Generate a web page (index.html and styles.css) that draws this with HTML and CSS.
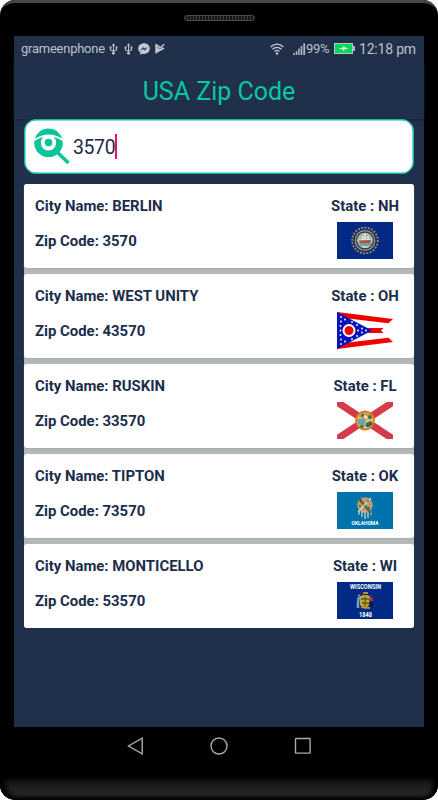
FILE: index.html
```html
<!DOCTYPE html>
<html lang="en">
<head>
<meta charset="utf-8">
<title>USA Zip Code</title>
<link rel="stylesheet" href="styles.css">
</head>
<body>
<div class="phone">
  <div class="bezel-top"><span class="speaker"></span></div>
  <main class="screen">
    <div class="status">
      <div class="status-left">
        <span class="carrier">grameenphone</span>
        <svg class="ico usb" viewBox="0 0 10 14"><use href="#usb"/></svg>
        <svg class="ico usb second" viewBox="0 0 10 14"><use href="#usb"/></svg>
        <svg class="ico messenger" viewBox="0 0 12 12"><path fill="#c3c8d0" d="M6 .3C2.7.3.2 2.6.2 5.6c0 1.7.8 3.2 2.1 4.2v2l1.9-1c.6.2 1.2.2 1.8.2 3.3 0 5.8-2.3 5.8-5.4S9.3.3 6 .3Z"/><path d="M2.7 7 5.3 4.5 6.7 5.9 9.2 4.5 6.7 7.2 5.2 5.8Z" fill="#20304a" stroke="#20304a" stroke-width=".5"/></svg>
        <svg class="ico play" viewBox="0 0 10 11"><path fill="#c3c8d0" d="M.3.5 5 3 4.600 3.900 3.600 3 2.500 4.200 4.700 6.600 7.600 3.900 9.700 5.500.3 10.700Z"/><path d="M3.500 3.700 4.800 5 9.200 1.300" fill="none" stroke="#c3c8d0" stroke-width="1.300"/></svg>
      </div>
      <div class="status-right">
        <svg class="ico wifi" viewBox="0 0 14 12"><g fill="none" stroke="#c3c8d0" stroke-width="1.3"><path d="M.6 3.9Q7-1.6 13.4 3.9M2.500 6.300Q7 2.400 11.500 6.300M4.500 8.500Q7 6.400 9.500 8.500"/></g><circle cx="7" cy="10.500" r="1.200" fill="#c3c8d0"/></svg>
        <svg class="ico signal" viewBox="0 0 13 12"><path fill="#aeb5c0" d="M.2 10h1.600v2H.2zM2.700 8h1.600v4H2.700zM5.200 5.500h1.600V12H5.200zM7.700 3h1.600v9H7.700zM10.300.3h1.800V12h-1.800z"/></svg>
        <span class="percent">99%</span>
        <svg class="ico battery" viewBox="0 0 22 11"><rect x=".5" y=".5" width="18" height="10" fill="#08d85a" stroke="#bcc2cb"/><path d="M20 3v5" stroke="#aeb5c0" stroke-width="2"/><path fill="#e8fff2" d="M4.500 5.500 9 4.500l.6-1.500 1.500 1.500 3.400 1-3.900 1-1 1.400L8.500 6.300Z"/></svg>
        <span class="clock">12:18 pm</span>
      </div>
    </div>
    <h1 class="title">USA Zip Code</h1>
    <div class="search">
      <svg class="search-icon" viewBox="0 0 36 37"><path d="m23 24 11.500 11" stroke="#0cc39c" stroke-width="3.600"/><circle cx="14.500" cy="14.800" r="14.300" fill="#0cc39c"/><path d="M0 12.300Q14.500 2.500 29 12.300" fill="none" stroke="#fff" stroke-width="1.700"/><circle cx="14.500" cy="14.800" r="7.700" fill="#fff"/><circle cx="14.500" cy="14.600" r="3.800" fill="#0cc39c"/></svg>
      <span class="query">3570</span><span class="caret"></span>
    </div>
    <section class="results">
      <article class="card">
        <div class="info"><p>City Name: BERLIN</p><p>Zip Code: 3570</p></div>
        <div class="state"><p>State : NH</p>
          <svg class="flag" viewBox="0 0 56 37"><rect width="56" height="37" fill="#002a86"/><circle cx="28" cy="18.500" r="12.800" fill="none" stroke="#a58445" stroke-width="2" stroke-dasharray="2 1.300"/><circle cx="28" cy="18.500" r="9.800" fill="#1c3c78" stroke="#b09656" stroke-width="1.300"/><circle cx="28" cy="18.500" r="7.800" fill="#dccb9f"/><path d="M21 17a7.300 7.300 0 0 1 14 0Z" fill="#9cb9b4"/><path d="M21 20h14a7 7 0 0 1-2 4H23Z" fill="#6ba3ad"/><path d="M21.500 18.500 34.500 18l-2 3h-9Z" fill="#a9533f"/><path d="M25.500 18v-4m2.500 4v-6m3 6v-4" stroke="#f4eee0" stroke-width="1.500"/></svg>
        </div>
      </article>
      <article class="card">
        <div class="info"><p>City Name: WEST UNITY</p><p>Zip Code: 43570</p></div>
        <div class="state"><p>State : OH</p>
          <svg class="flag" viewBox="0 0 56 37"><path fill="#fff" d="m0 0 56 7-12 11.500L56 30 0 37Z"/><path fill="#f00000" d="m0 0 56 7-4.500 4.300L0 5.300ZM0 37l56-7-4.500-4.300L0 31.700ZM0 16h46.500L44 18.500l2.500 2.500H0Z"/><path fill="#0714bd" d="m0 0 35 18.500L0 37Z"/><g fill="#fff"><circle cx="4" cy="5" r=".9"/><circle cx="8" cy="7.500" r=".9"/><circle cx="4" cy="9.500" r=".9"/><circle cx="15" cy="10" r=".9"/><circle cx="20" cy="13" r=".9"/><circle cx="3.500" cy="14" r=".9"/><circle cx="3.500" cy="18.500" r=".9"/><circle cx="3.500" cy="23" r=".9"/><circle cx="4" cy="27.500" r=".9"/><circle cx="8" cy="29.500" r=".9"/><circle cx="4" cy="32" r=".9"/><circle cx="15" cy="27" r=".9"/><circle cx="20" cy="24" r=".9"/><circle cx="21" cy="18.500" r=".9"/><circle cx="25" cy="16.500" r=".9"/><circle cx="25" cy="20.500" r=".9"/><circle cx="29" cy="18.500" r=".9"/></g><circle cx="12" cy="18.500" r="5.500" fill="#f00000" stroke="#fff" stroke-width="2"/></svg>
        </div>
      </article>
      <article class="card">
        <div class="info"><p>City Name: RUSKIN</p><p>Zip Code: 33570</p></div>
        <div class="state"><p>State : FL</p>
          <svg class="flag" viewBox="0 0 56 37"><rect width="56" height="37" fill="#fff"/><path d="m0 0 56 37M56 0 0 37" stroke="#d53a4b" stroke-width="7"/><circle cx="28" cy="18.500" r="9" fill="#d8c58f" stroke="#df7918" stroke-width="1.800"/><path fill="#65a7b1" d="M20.500 17h8v7l-4 .5-4-3Z"/><path fill="#bf9853" d="m21 14 5-3 8 1 1 5-8 1Z"/><path fill="#396b44" d="m24 13 2-2 1 3-2 1Zm5 8 5-2 2 3-4 3h-3Zm-7 3 3-1 2 2-2 1Zm9-10 3-1 1 3-3 1Z"/><path fill="#f3e8bd" d="m27 13 3 1 1 3-4-1Z"/></svg>
        </div>
      </article>
      <article class="card">
        <div class="info"><p>City Name: TIPTON</p><p>Zip Code: 73570</p></div>
        <div class="state"><p>State : OK</p>
          <svg class="flag" viewBox="0 0 56 37"><rect width="56" height="37" fill="#0072ac"/><circle cx="28" cy="13" r="7.800" fill="#bb9b73"/><path d="M22 19v4m3-4v6m3-6v8m3-7v6m3-7v4" stroke="#d9d2bb" stroke-width="1.200"/><path d="m22 7 12 14" stroke="#536b45" stroke-width="2.500"/><path d="m34 6-13 14" stroke="#e2d8ac" stroke-width="1.200"/><path d="M24 7v3m7-2v2m-8 3v2m9 0v2" stroke="#654328" stroke-width="1.200"/><text x="28" y="32.800" text-anchor="middle" textLength="27" lengthAdjust="spacingAndGlyphs" class="flag-text oklahoma">OKLAHOMA</text></svg>
        </div>
      </article>
      <article class="card">
        <div class="info"><p>City Name: MONTICELLO</p><p>Zip Code: 53570</p></div>
        <div class="state"><p>State : WI</p>
          <svg class="flag" viewBox="0 0 56 37"><rect width="56" height="37" fill="#002a86"/><text x="28.500" y="7.200" text-anchor="middle" textLength="31" lengthAdjust="spacingAndGlyphs" class="flag-text">WISCONSIN</text><path fill="#c9a335" d="M23 14q5-2 10 0l-1 9-4 4-5-4Z"/><path d="M24 17h8m-7 4h7m-4-6v9" stroke="#51601b" stroke-width="1.400"/><path d="M26 11h5m-7 14 9 1" stroke="#b08c36" stroke-width="2"/><path d="m22 15-1 5v6" stroke="#7c9eb6" stroke-width="2.600" fill="none"/><path d="m34 15 1 4" stroke="#ca2335" stroke-width="3"/><path d="m34 20 1 6" stroke="#131a35" stroke-width="2.500"/><circle cx="22" cy="13.500" r="1" fill="#d1a987"/><text x="28.500" y="35" text-anchor="middle" textLength="13" lengthAdjust="spacingAndGlyphs" class="flag-text">1848</text></svg>
        </div>
      </article>
    </section>
  </main>
  <nav class="nav">
    <svg viewBox="0 0 18 18"><path d="M16.200 1.200v15.600L2.500 9Z"/></svg>
    <svg viewBox="0 0 18 18"><circle cx="9" cy="9" r="8"/></svg>
    <svg viewBox="0 0 18 18"><rect x="1.500" y="1.500" width="14.600" height="14.600" rx=".5"/></svg>
  </nav>
  <div class="chin"></div>
</div>
<svg class="symbols"><symbol id="usb" viewBox="0 0 10 14"><g fill="none" stroke="#bbc1ca" stroke-width="1.200"><path d="M5 2v10M1.500 5v3L5 9.500 8.500 8V5"/></g><path fill="#bbc1ca" d="M5 .2 7 3.200H3ZM.3 4h2.400v2.300H.3Zm7 0h2.400v2.300H7.300Z"/><circle cx="5" cy="12" r="1.700" fill="#bbc1ca"/></symbol></svg>
</body>
</html>
```

FILE: styles.css
```css
* { box-sizing: border-box; }
body { margin: 0; background: #fff; font-family: Roboto, sans-serif; }
p, h1 { margin: 0; }
svg { display: block; flex: none; }
.symbols { display: none; }
.phone {
  width: 438px;
  height: 800px;
  overflow: hidden;
  display: flex;
  flex-direction: column;
  background: #000;
  border-radius: 15px;
}
.bezel-top {
  height: 36px;
  flex: none;
  border-top: 3px solid #484848;
  border-radius: 15px 15px 0 0;
  display: flex;
  justify-content: center;
  padding-top: 12px;
}
.speaker {
  width: 71px;
  height: 6px;
  border: 1px solid #494949;
  border-radius: 3px;
  background: repeating-linear-gradient(90deg, #151515 0 2px, #3b3b3b 2px 3px);
}
.screen {
  width: 410px;
  height: 691px;
  flex: none;
  margin: 0 auto;
  background: #20304a;
}
.status {
  height: 25px;
  display: flex;
  justify-content: space-between;
  padding: 0 9px 0 7px;
  color: #bbc1ca;
  line-height: 25px;
}
.status-left, .status-right { display: flex; align-items: center; }
.carrier { font-size: 13px; letter-spacing: -.25px; width: 84px; white-space: nowrap; }
.usb { width: 9px; height: 12px; margin-left: 4px; }
.usb.second { margin-left: 6px; }
.messenger { width: 12px; height: 12px; margin-left: 5px; }
.play { width: 10px; height: 11px; margin-left: 5px; }
.wifi { width: 14px; height: 12px; margin-right: 9px; }
.signal { width: 13px; height: 12px; }
.percent { font-size: 13px; letter-spacing: -.3px; width: 24px; white-space: nowrap; }
.battery { width: 22px; height: 11px; margin: 0 3px 0 4px; }
.clock { font-size: 14px; letter-spacing: -.2px; width: 56px; white-space: nowrap; padding-top: 1px; }
.title {
  height: 58px;
  line-height: 61px;
  text-align: center;
  color: #08c5a3;
  font-size: 25px;
  font-weight: 400;
  box-shadow: 0 1px 2px #18253a;
}
.search {
  height: 55px;
  margin: 0 10px;
  border: 1.500px solid #0ebd9f;
  border-radius: 12px;
  background: #fff;
  box-shadow: inset 0 0 0 .5px #0ebd9f;
  display: flex;
  align-items: center;
  padding-left: 9px;
}
.search-icon { width: 36px; height: 37px; margin-bottom: 1px; }
.query { color: #1c2b49; font-size: 19.500px; letter-spacing: -.4px; margin: 3px 0 0 3px; line-height: 24px; }
.caret { width: 2px; height: 25px; background: #ed1261; }
.results {
  margin: 10px 10px 0;
  display: flex;
  flex-direction: column;
  gap: 6px;
  background: #b5b8b9;
  border-radius: 3px;
}
.card {
  height: 84px;
  background: #fff;
  border-radius: 3px;
  padding: 12px 11px;
  display: flex;
  justify-content: space-between;
  color: #1c2d4c;
  font-size: 14.900px;
  font-weight: 700;
  line-height: 20px;
  box-shadow: 0 1px 1px #a7abad;
}
.card:last-child { box-shadow: none; }
.info { display: flex; flex-direction: column; gap: 15px; }
.state { width: 76px; display: flex; flex-direction: column; align-items: center; white-space: nowrap; }
.flag { width: 56px; height: 37px; margin-top: 6px; }
.flag-text { fill: #fff; font: 700 6.500px Roboto, sans-serif; }
.oklahoma { font-size: 5px; }
.nav {
  flex: 1;
  display: flex;
  justify-content: center;
  gap: 66px;
  padding-top: 10px;
}
.nav svg { width: 18px; height: 18px; fill: none; stroke: #aaa; stroke-width: 1.400; }
.chin {
  height: 22px;
  flex: none;
  border-radius: 0 0 15px 15px;
  background: linear-gradient(#101010, #282828 75%, #111);
  box-shadow: inset 5px -2px 5px #000, inset -5px 0 5px #000;
}
```
